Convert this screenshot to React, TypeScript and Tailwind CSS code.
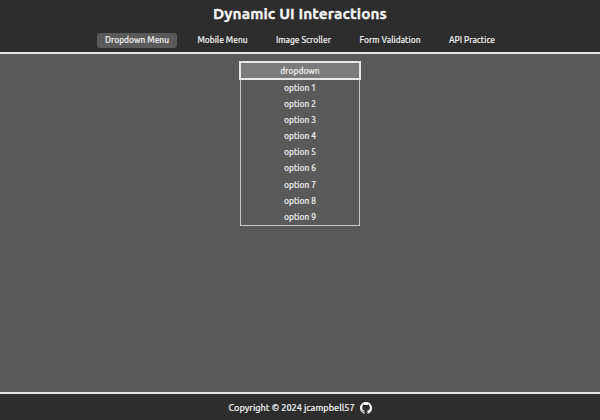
import React from "react";

const tabs = [
  { label: "Dropdown Menu", box: "w-[80px] rounded-[3px] bg-[#5a5a5a]" },
  { label: "Mobile Menu", box: "w-[66px]" },
  { label: "Image Scroller", box: "w-[71px]" },
  { label: "Form Validation", box: "w-[77px]" },
  { label: "API Practice", box: "w-[62px]" },
];

const options = [1, 2, 3, 4, 5, 6, 7, 8, 9];

function GithubMark() {
  return (
    <svg className="size-3 text-white" viewBox="0 0 16 16" fill="currentColor" aria-hidden="true">
      <path d="M8 0C3.58 0 0 3.58 0 8c0 3.54 2.29 6.53 5.47 7.59.4.07.55-.17.55-.38 0-.19-.01-.82-.01-1.49-2.01.37-2.53-.49-2.69-.94-.09-.23-.48-.94-.82-1.13-.28-.15-.68-.52-.01-.53.63-.01 1.08.58 1.23.82.72 1.21 1.87.87 2.33.66.07-.52.28-.87.51-1.07-1.78-.2-3.64-.89-3.64-3.95 0-.87.31-1.59.82-2.15-.08-.2-.36-1.02.08-2.12 0 0 .67-.21 2.2.82.64-.18 1.32-.27 2-.27s1.36.09 2 .27c1.53-1.04 2.2-.82 2.2-.82.44 1.1.16 1.92.08 2.12.51.56.82 1.27.82 2.15 0 3.07-1.87 3.75-3.65 3.95.29.25.54.73.54 1.48 0 1.07-.01 1.93-.01 2.2 0 .21.15.46.55.38A8.01 8.01 0 0 0 16 8c0-4.42-3.58-8-8-8Z" />
    </svg>
  );
}

export default function App() {
  return (
    <div className="flex h-[420px] w-[600px] flex-col overflow-hidden bg-[#5a5a5a] font-['Ubuntu','Noto_Sans',sans-serif] text-[8.4px] font-medium text-[#eeeeee] [-webkit-text-stroke:0.15px_currentColor]">
      <header className="h-[54px] shrink-0 border-b-2 border-[#e4e4e4] bg-[#2d2d2d]">
        <h1 className="pt-[3px] text-center text-[15.4px] leading-[21px] font-bold tracking-[0.08px] text-[#f5f5f5] [-webkit-text-stroke:0.3px_currentColor]">
          Dynamic UI Interactions
        </h1>
        <nav className="mt-[9px] flex gap-[12.5px] pl-[97px]">
          {tabs.map((tab) => (
            <a key={tab.label} className={`flex h-[15px] shrink-0 items-center justify-center whitespace-nowrap ${tab.box}`}>
              {tab.label}
            </a>
          ))}
        </nav>
      </header>
      <main className="flex flex-1 flex-col items-center pt-[7px]">
        <button className="flex h-[19px] w-[122px] items-center justify-center border-2 border-[#e6e6e6] bg-[#7b7b7b] pt-px">
          dropdown
        </button>
        <ul className="h-[146px] w-[120px] border border-t-0 border-[#c8c8c8]">
          {options.map((n) => (
            <li key={n} className="flex h-[16.15px] items-center justify-center">
              option {n}
            </li>
          ))}
        </ul>
      </main>
      <footer className="flex h-[28px] shrink-0 items-center justify-center gap-[5px] border-t-2 border-[#e4e4e4] bg-[#2d2d2d] pt-[2px] text-[9.14px]">
        <span>Copyright © 2024 jcampbell57</span>
        <GithubMark />
      </footer>
    </div>
  );
}
